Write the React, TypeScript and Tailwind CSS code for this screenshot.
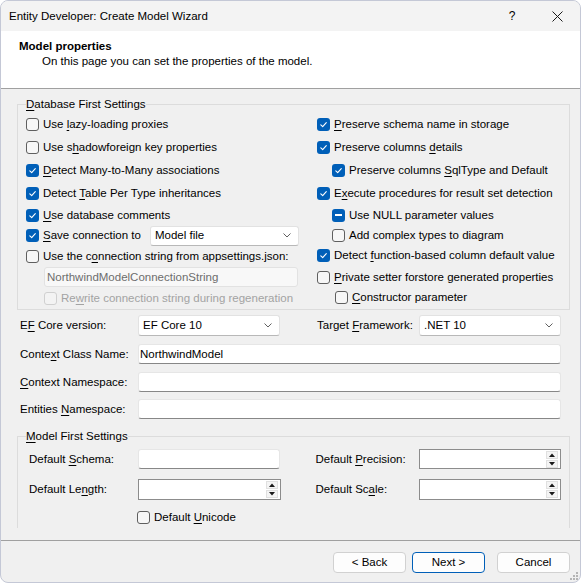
import React from "react";

type CheckState = "on" | "off" | "mixed";

function U({ children }: { children: React.ReactNode }) {
  return <span className="underline underline-offset-[2px] decoration-[1px]">{children}</span>;
}

function Box({ state = "off", disabled = false }: { state?: CheckState; disabled?: boolean }) {
  if (state === "off") {
    return (
      <span
        className={
          disabled
            ? "block w-[13px] h-[13px] shrink-0 rounded-[3px] border border-[#d0d0d0] bg-[#f3f3f3]"
            : "block w-[13px] h-[13px] shrink-0 rounded-[3px] border border-[#5f5f5f] bg-[#f7f7f7]"
        }
      />
    );
  }
  return (
    <span className="flex w-[13px] h-[13px] shrink-0 items-center justify-center rounded-[3px] bg-[#005fb8]">
      {state === "on" ? (
        <svg width="9" height="9" viewBox="0 0 9 9">
          <path
            d="M1.8 4.8 L3.7 6.6 L7.3 2.6"
            fill="none"
            stroke="white"
            strokeWidth="1.1"
            strokeLinecap="round"
            strokeLinejoin="round"
          />
        </svg>
      ) : (
        <span className="block w-[7px] h-[1.5px] bg-white" />
      )}
    </span>
  );
}

function Combo({ value, className }: { value: string; className: string }) {
  return (
    <div
      className={`flex items-center justify-between bg-white border border-[#e2e2e2] border-b-[#b8b8b8] rounded-[3px] pl-[4px] pr-[7px] ${className}`}
    >
      <span>{value}</span>
      <svg width="8" height="5" viewBox="0 0 8 5">
        <path d="M0.5 0.5 L4 4 L7.5 0.5" fill="none" stroke="#606060" strokeWidth="1" />
      </svg>
    </div>
  );
}

function TextBox({ value = "", className }: { value?: string; className: string }) {
  return (
    <div
      className={`flex items-center bg-white border border-[#e6e6e6] border-b-[#878787] rounded-[3px] pl-[1px] ${className}`}
    >
      {value}
    </div>
  );
}

function SpinArrow({ up }: { up: boolean }) {
  return (
    <span className="flex items-center justify-center w-[12px] h-[8px] bg-[#f4f4f4] border border-[#e0e0e0]">
      <svg width="6" height="4" viewBox="0 0 6 4">
        <path d={up ? "M0 4 L3 0.5 L6 4 Z" : "M0 0 L3 3.5 L6 0 Z"} fill="#1a1a1a" />
      </svg>
    </span>
  );
}

function Spin({ className }: { className: string }) {
  return (
    <div className={`flex items-center justify-end bg-white border border-[#8c8c8c] pr-[2px] ${className}`}>
      <div className="flex flex-col gap-[1px]">
        <SpinArrow up />
        <SpinArrow up={false} />
      </div>
    </div>
  );
}

function Button({ label, primary = false }: { label: string; primary?: boolean }) {
  return (
    <div
      className={
        primary
          ? "flex items-center justify-center w-[73px] h-[21px] rounded-[4px] border border-[#005fb8] bg-[#fdfdfd]"
          : "flex items-center justify-center w-[73px] h-[21px] rounded-[4px] border border-[#d1d1d1] bg-[#fdfdfd]"
      }
    >
      {label}
    </div>
  );
}

export default function App() {
  return (
    <div className="relative flex flex-col w-[581px] h-[583px] overflow-hidden rounded-[8px] border border-[#c4c8d6] bg-[#f0f0f0] text-[11.5px] leading-[15px] text-black font-['Liberation_Sans',Arial,sans-serif]">
      {/* title bar */}
      <div className="flex items-center h-[30px] shrink-0 bg-[#f3f3f3]">
        <span className="pl-[8px]">Entity Developer: Create Model Wizard</span>
        <div className="ml-auto flex h-full">
          <div className="flex items-center justify-center w-[44px] h-full text-[12px]">?</div>
          <div className="flex items-center justify-center w-[46px] h-full">
            <svg width="11" height="11" viewBox="0 0 11 11">
              <path d="M0.5 0.5 L10.5 10.5 M10.5 0.5 L0.5 10.5" stroke="#1a1a1a" strokeWidth="1" />
            </svg>
          </div>
        </div>
      </div>

      {/* page header */}
      <div className="h-[58px] shrink-0 bg-white border-b border-[#a0a0a0] pt-[8px] pl-[18px]">
        <div className="font-bold">Model properties</div>
        <div className="pl-[23px]">On this page you can set the properties of the model.</div>
      </div>

      {/* page body */}
      <div className="h-[439px] shrink-0 overflow-hidden pl-[16px] pr-[10px] pt-[8px]">
        <fieldset className="min-w-0 border border-[#dcdcdc] px-[8px] pb-[1px]">
          <legend className="h-[14px] leading-[14px] p-0">
            <U>D</U>atabase First Settings
          </legend>
          <div className="grid grid-cols-[291px_1fr] pt-[2px]">
            <div className="flex flex-col">
              <div className="flex items-center h-[23px]">
                <Box />
                <span className="ml-[4px]">
                  Use <U>l</U>azy-loading proxies
                </span>
              </div>
              <div className="flex items-center h-[23px]">
                <Box />
                <span className="ml-[4px]">
                  Use s<U>h</U>adowforeign key properties
                </span>
              </div>
              <div className="flex items-center h-[23px]">
                <Box state="on" />
                <span className="ml-[4px]">
                  <U>D</U>etect Many-to-Many associations
                </span>
              </div>
              <div className="flex items-center h-[23px]">
                <Box state="on" />
                <span className="ml-[4px]">
                  Detect <U>T</U>able Per Type inheritances
                </span>
              </div>
              <div className="flex items-center h-[20px]">
                <Box state="on" />
                <span className="ml-[4px]">
                  <U>U</U>se database comments
                </span>
              </div>
              <div className="flex items-center h-[21px]">
                <Box state="on" />
                <span className="ml-[4px] w-[107px] shrink-0">
                  <U>S</U>ave connection to
                </span>
                <Combo value="Model file" className="w-[149px] h-[20px]" />
              </div>
              <div className="flex items-center h-[20px]">
                <Box />
                <span className="ml-[4px]">
                  Use the c<U>o</U>nnection string from appsettings.json:
                </span>
              </div>
              <div className="flex items-center h-[22px] pl-[18px]">
                <div className="flex items-center w-[254px] h-[20px] bg-[#f8f8f8] border border-[#e2e2e2] rounded-[3px] pl-[2px] text-[#6d6d6d]">
                  NorthwindModelConnectionString
                </div>
              </div>
              <div className="flex items-center h-[20px] pl-[18px] text-[#a3a3a3]">
                <Box disabled />
                <span className="ml-[4px]">
                  Re<U>w</U>rite connection string during regeneration
                </span>
              </div>
            </div>

            <div className="flex flex-col">
              <div className="flex items-center h-[23px]">
                <Box state="on" />
                <span className="ml-[4px]">
                  <U>P</U>reserve schema name in storage
                </span>
              </div>
              <div className="flex items-center h-[23px]">
                <Box state="on" />
                <span className="ml-[4px]">
                  Preserve columns <U>d</U>etails
                </span>
              </div>
              <div className="flex items-center h-[23px] pl-[15px]">
                <Box state="on" />
                <span className="ml-[4px]">
                  Preserve columns <U>S</U>qlType and Default
                </span>
              </div>
              <div className="flex items-center h-[23px]">
                <Box state="on" />
                <span className="ml-[4px]">
                  E<U>x</U>ecute procedures for result set detection
                </span>
              </div>
              <div className="flex items-center h-[20px] pl-[15px]">
                <Box state="mixed" />
                <span className="ml-[4px]">Use NULL parameter values</span>
              </div>
              <div className="flex items-center h-[20px] pl-[15px]">
                <Box />
                <span className="ml-[4px]">Add complex types to diagram</span>
              </div>
              <div className="flex items-center h-[21px]">
                <Box state="on" />
                <span className="ml-[4px]">
                  Detect <U>f</U>unction-based column default value
                </span>
              </div>
              <div className="flex items-center h-[22px]">
                <Box />
                <span className="ml-[4px]">
                  <U>P</U>rivate setter forstore generated properties
                </span>
              </div>
              <div className="flex items-center h-[19px] pl-[18px]">
                <Box />
                <span className="ml-[4px]">
                  <U>C</U>onstructor parameter
                </span>
              </div>
            </div>
          </div>
        </fieldset>

        <div className="mt-[5px] flex items-center h-[21px]">
          <span className="w-[121px] shrink-0 pl-[3px]">
            E<U>F</U> Core version:
          </span>
          <Combo value="EF Core 10" className="w-[142px] h-[21px]" />
          <span className="ml-[37px] w-[102px] shrink-0">
            Target <U>F</U>ramework:
          </span>
          <Combo value=".NET 10" className="w-[142px] h-[21px]" />
        </div>
        <div className="mt-[8px] flex items-center h-[20px]">
          <span className="w-[121px] shrink-0 pl-[3px]">
            Conte<U>x</U>t Class Name:
          </span>
          <TextBox value="NorthwindModel" className="w-[423px] h-[20px]" />
        </div>
        <div className="mt-[8px] flex items-center h-[20px]">
          <span className="w-[121px] shrink-0 pl-[3px]">
            <U>C</U>ontext Namespace:
          </span>
          <TextBox className="w-[423px] h-[20px]" />
        </div>
        <div className="mt-[7px] flex items-center h-[20px]">
          <span className="w-[121px] shrink-0 pl-[3px]">
            Entities <U>N</U>amespace:
          </span>
          <TextBox className="w-[423px] h-[20px]" />
        </div>

        <fieldset className="mt-[10px] min-w-0 border border-[#dcdcdc] px-[8px]">
          <legend className="h-[14px] leading-[14px] p-0">
            <U>M</U>odel First Settings
          </legend>
          <div className="pl-[3px] pt-[6px] pb-[30px]">
            <div className="flex items-center h-[20px]">
              <span className="w-[109px] shrink-0">
                Default <U>S</U>chema:
              </span>
              <TextBox className="w-[142px] h-[20px]" />
              <span className="ml-[36px] w-[103px] shrink-0">
                Default <U>P</U>recision:
              </span>
              <Spin className="w-[143px] h-[20px]" />
            </div>
            <div className="mt-[10px] flex items-center h-[21px]">
              <span className="w-[109px] shrink-0">
                Default Le<U>n</U>gth:
              </span>
              <Spin className="w-[143px] h-[21px]" />
              <span className="ml-[35px] w-[103px] shrink-0">
                Default Sc<U>a</U>le:
              </span>
              <Spin className="w-[143px] h-[21px]" />
            </div>
            <div className="mt-[7px] flex items-center h-[20px] pl-[108px]">
              <Box />
              <span className="ml-[4px]">
                Default <U>U</U>nicode
              </span>
            </div>
          </div>
        </fieldset>
      </div>

      <div className="flex-1" />

      {/* wizard buttons */}
      <div className="h-[42px] shrink-0 flex items-start justify-end border-t border-[#a0a0a0] pt-[11px] pr-[10px]">
        <Button label="< Back" />
        <div className="w-[6px]" />
        <Button label="Next >" primary />
        <div className="w-[12px]" />
        <Button label="Cancel" />
      </div>

      {/* size grip */}
      <svg className="absolute right-[1px] bottom-[1px]" width="10" height="10" viewBox="0 0 10 10">
        <g fill="#b4b4b4">
          <rect x="7" y="1" width="2" height="2" />
          <rect x="4" y="4" width="2" height="2" />
          <rect x="7" y="4" width="2" height="2" />
          <rect x="1" y="7" width="2" height="2" />
          <rect x="4" y="7" width="2" height="2" />
          <rect x="7" y="7" width="2" height="2" />
        </g>
      </svg>
    </div>
  );
}
